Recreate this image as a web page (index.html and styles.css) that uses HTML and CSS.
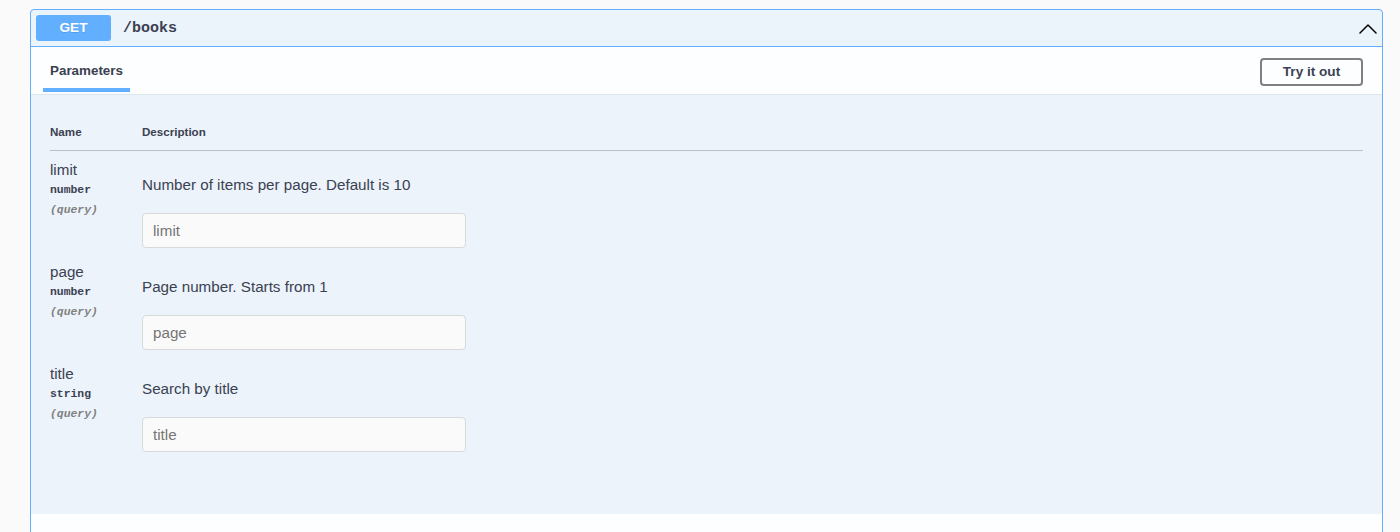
FILE: index.html
```html
<!DOCTYPE html>
<html>
<head>
<meta charset="utf-8">
<link rel="stylesheet" href="styles.css">
</head>
<body>
<div class="opblock">
  <div class="summary">
    <span class="method">GET</span>
    <span class="path">/books</span>
    <svg class="arrow" width="20" height="20" viewBox="0 0 20 20"><polyline points="2,14 10,6 18,14" fill="none" stroke="#000" stroke-width="1.5" stroke-linecap="round" stroke-linejoin="round"/></svg>
  </div>
  <div class="section-header">
    <div class="tab">Parameters</div>
    <button class="try">Try it out</button>
  </div>
  <div class="params">
    <div class="col-head">
      <div class="c-name">Name</div>
      <div class="c-desc">Description</div>
    </div>
    <div class="row">
      <div class="c-name">
        <div class="p-name">limit</div>
        <div class="p-type">number</div>
        <div class="p-in">(query)</div>
      </div>
      <div class="c-desc">
        <p class="desc">Number of items per page. Default is 10</p>
        <input class="field" type="text" placeholder="limit">
      </div>
    </div>
    <div class="row">
      <div class="c-name">
        <div class="p-name">page</div>
        <div class="p-type">number</div>
        <div class="p-in">(query)</div>
      </div>
      <div class="c-desc">
        <p class="desc">Page number. Starts from 1</p>
        <input class="field" type="text" placeholder="page">
      </div>
    </div>
    <div class="row">
      <div class="c-name">
        <div class="p-name">title</div>
        <div class="p-type">string</div>
        <div class="p-in">(query)</div>
      </div>
      <div class="c-desc">
        <p class="desc">Search by title</p>
        <input class="field" type="text" placeholder="title">
      </div>
    </div>
  </div>
  <div class="after"></div>
</div>
</body>
</html>
```

FILE: styles.css
```css
html, body {
  margin: 0;
  padding: 0;
  background: #fafafa;
  font-family: "Liberation Sans", Arial, sans-serif;
  color: #3b4151;
  overflow: hidden;
}
.opblock {
  margin: 9px 17px 0 30px;
  border: 1px solid #61affe;
  border-radius: 4px 4px 0 0;
  background: #ebf3fb;
}
.summary {
  display: flex;
  align-items: center;
  height: 36px;
  padding: 0 5px;
  border-bottom: 1px solid #61affe;
}
.method {
  width: 75px;
  height: 26px;
  line-height: 26px;
  text-align: center;
  background: #61affe;
  color: #fff;
  font-weight: bold;
  font-size: 13.6px;
  border-radius: 3px;
  text-shadow: 0 1px 0 rgba(0,0,0,.1);
}
.path {
  margin-left: 12px;
  font-family: "Liberation Mono", "Courier New", monospace;
  font-weight: bold;
  font-size: 15px;
  color: #3b4151;
  flex: 1;
}
.arrow {
  margin-right: -1px;
  margin-top: 2px;
}
.section-header {
  display: flex;
  align-items: center;
  justify-content: space-between;
  height: 47px;
  background: #fdfeff;
  border-bottom: 1px solid #dde5ee;
  padding: 0 19px 0 12px;
}
.tab {
  align-self: stretch;
  box-sizing: border-box;
  width: 87px;
  padding-top: 16px;
  text-align: center;
  font-weight: bold;
  font-size: 13.4px;
  position: relative;
}
.tab::after {
  content: "";
  position: absolute;
  left: 0;
  right: 0;
  bottom: 2px;
  height: 4px;
  background: #61affe;
}
.try {
  width: 103px;
  height: 28px;
  margin-top: 2px;
  background: transparent;
  border: 2px solid #808080;
  border-radius: 4px;
  font-family: "Liberation Sans", Arial, sans-serif;
  font-weight: bold;
  font-size: 13.6px;
  color: #3b4151;
  padding: 0;
}
.params {
  padding: 0 19px 47px 19px;
  background: #ecf3fb;
}
.col-head {
  display: flex;
  padding-top: 30px;
  height: 25px;
  border-bottom: 1px solid #b8c0ca;
  font-size: 11.6px;
  font-weight: bold;
  line-height: 14px;
}
.c-name {
  width: 92px;
  flex: none;
}
.c-desc {
  flex: 1;
}
.row {
  display: flex;
  height: 102px;
  padding-top: 10px;
}
.params .row + .row { padding-top: 0; }
.p-name {
  font-size: 15.2px;
  line-height: 18px;
}
.p-type {
  font-family: "Liberation Mono", "Courier New", monospace;
  font-weight: bold;
  font-size: 11.4px;
  line-height: 21px;
  margin-top: 1px;
}
.p-in {
  font-family: "Liberation Mono", "Courier New", monospace;
  font-style: italic;
  font-weight: bold;
  font-size: 11.4px;
  line-height: 18px;
  color: #808080;
}
.desc {
  margin: 15px 0 19px 0;
  font-size: 15.2px;
  line-height: 18px;
}
.field {
  display: block;
  box-sizing: border-box;
  width: 324px;
  height: 35px;
  padding: 0 10px;
  border: 1px solid #d9d9d9;
  border-radius: 4px;
  background: #fafafa;
  font-family: "Liberation Sans", Arial, sans-serif;
  font-size: 15.2px;
  color: #3b4151;
  outline: none;
}
.field::placeholder {
  color: #757575;
}
.after {
  height: 40px;
  background: #fdfeff;
}
```
